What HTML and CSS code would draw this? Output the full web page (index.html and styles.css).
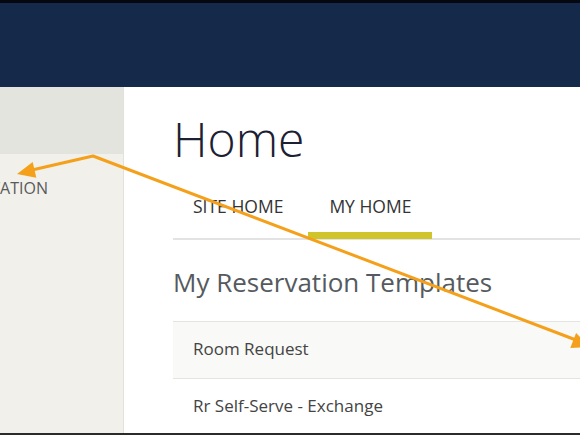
FILE: index.html
```html
<!DOCTYPE html>
<html lang="en">
  <head>
    <meta charset="UTF-8" />
    <meta name="viewport" content="width=device-width, initial-scale=1.0" />
    <title>Home</title>
    <link rel="stylesheet" href="styles.css">
  </head>
  <body>
    <header class="topbar"></header>

    <div class="main">
      <aside class="sidebar">
        <div class="sidebar-top"></div>
        <div class="sidebar-item">
          <span>CREATE A RESERVATION</span>
        </div>
      </aside>

      <section class="content">
        <h1 class="page-title">Home</h1>

        <nav class="tabs">
          <a href="#" class="tab">SITE HOME</a>
          <a href="#" class="tab active">MY HOME</a>
        </nav>

        <h2 class="section-title">My Reservation Templates</h2>

        <ul class="templates">
          <li class="template shaded">Room Request</li>
          <li class="template">Rr Self-Serve - Exchange</li>
        </ul>
      </section>
    </div>

    <!-- annotation arrows drawn over the screenshot -->
    <svg class="arrows" width="580" height="435" viewBox="0 0 580 435">
      <polyline points="32,170 93,156 576,340" />
      <polygon points="17,174 36.3,177.7 32.7,162.1" />
      <polygon points="590,347 570.3,348 576.1,333" />
    </svg>
  </body>
</html>
```

FILE: styles.css
```css
body {
  font-family: "Open Sans", Arial, sans-serif;
  background-color: #ffffff;
  margin: 0;
  width: 580px;
  height: 435px;
  overflow: hidden;
  position: relative;
}

.topbar {
  height: 84px;
  background-color: #152a4a;
  border-top: 3px solid #05080e;
}

.main {
  display: flex;
  height: 346px;
  border-bottom: 2px solid #2b2b2b;
  overflow: hidden;
}

.sidebar {
  width: 123px;
  flex-shrink: 0;
  background-color: #f1f0eb;
  border-right: 1px solid #e2e2dd;
}

.sidebar-top {
  height: 67px;
  background-color: #e4e4df;
}

.sidebar-item {
  display: flex;
  justify-content: flex-end;
  width: 48px;
  overflow: hidden;
  padding-top: 23px;
  font-size: 16px;
  line-height: 22px;
  color: #5a5a5a;
  white-space: nowrap;
}

.content {
  flex: 1;
  padding-left: 49px;
  min-width: 0;
}

.page-title {
  margin: 19px 0 0;
  font-size: 48px;
  font-weight: 300;
  line-height: 65px;
  color: #1c2033;
}

.tabs {
  display: flex;
  gap: 5px;
  border-bottom: 2px solid #e3e3e3;
}

.tab {
  padding: 23px 20px 14px;
  font-size: 17.5px;
  line-height: 24px;
  color: #333333;
  text-decoration: none;
  border-bottom: 7px solid transparent;
  margin-bottom: -1px;
}

.tab.active {
  padding: 23px 21px 14px;
  border-bottom-color: #cfc52b;
}

.section-title {
  margin: 24px 0 21px;
  font-size: 26px;
  font-weight: 400;
  line-height: 36px;
  color: #555a60;
}

.templates {
  list-style: none;
  margin: 0;
  padding: 0;
}

.template {
  padding: 15px 20px 17px;
  font-size: 17px;
  line-height: 24px;
  color: #444444;
  border-top: 1px solid #e4e4e2;
}

.template.shaded {
  background-color: #f9f9f7;
}

.arrows {
  position: absolute;
  top: 0;
  left: 0;
  pointer-events: none;
}

.arrows polyline {
  fill: none;
  stroke: #f5a01a;
  stroke-width: 3;
  stroke-linejoin: round;
}

.arrows polygon {
  fill: #f5a01a;
}
```
